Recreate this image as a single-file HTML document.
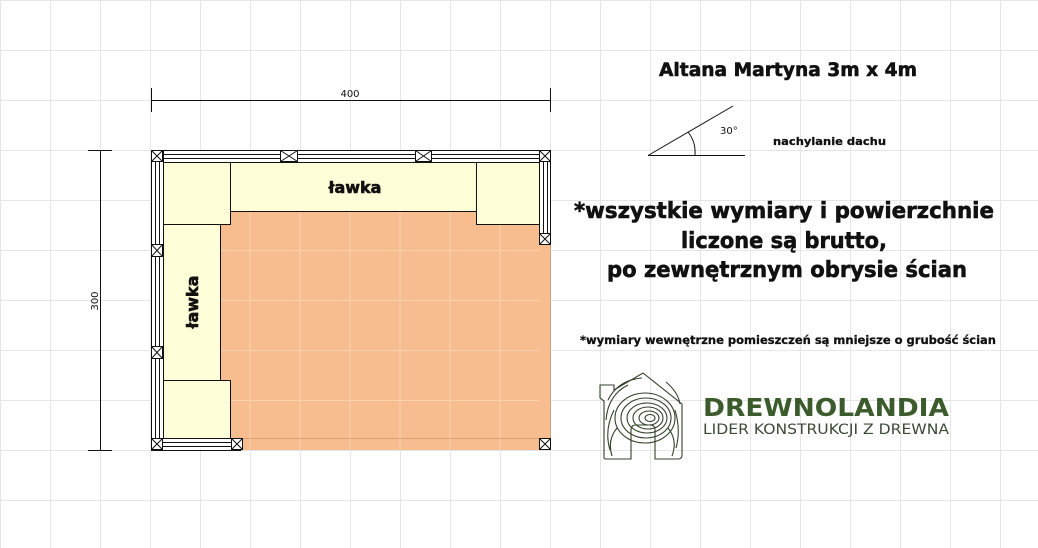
<!DOCTYPE html>
<html><head><meta charset="utf-8"><style>
html,body{margin:0;padding:0;background:#fff;}
svg{display:block}
text{font-family:"DejaVu Sans","Liberation Sans",sans-serif;}
.b{stroke:#111;stroke-width:0.6}
</style></head><body>
<svg width="1038" height="548" viewBox="0 0 1038 548" xmlns="http://www.w3.org/2000/svg">
<defs>
<pattern id="g" x="0" y="0" width="50" height="50" patternUnits="userSpaceOnUse">
<path d="M0 0.5H50M0.5 0V50" stroke="#e6e6e6" stroke-width="1" fill="none"/>
</pattern>
</defs>
<rect width="1038" height="548" fill="#fff"/>
<rect width="1038" height="548" fill="url(#g)"/>

<rect x="220" y="211" width="330" height="239" fill="#f7bd8e"/>
<g stroke="#fbd2b0" stroke-width="1">
<path d="M250 211V450M300 211V450M350 211V450M400 211V450M450 211V450M500 211V450M220 250.5H540M220 300.5H540M220 350.5H540M220 400.5H540"/>
</g>
<path d="M240 438.5H540" stroke="#d8a07a"/>
<path d="M550.5 244V450" stroke="#c9a080"/>

<g fill="#fefed8" stroke="#111" stroke-width="1">
<rect x="163.5" y="162.5" width="67" height="62"/>
<rect x="230.5" y="162.5" width="246" height="49"/>
<rect x="476.5" y="162.5" width="63" height="62"/>
<rect x="163.5" y="224.5" width="57" height="156"/>
<rect x="163.5" y="380.5" width="67" height="58"/>
</g>
<text x="355" y="193" font-size="16" font-weight="bold" text-anchor="middle" fill="#111" class="b">ławka</text>
<text transform="translate(198,302) rotate(-90)" font-size="16" font-weight="bold" text-anchor="middle" fill="#111" class="b">ławka</text>

<g fill="#fff" stroke="#111" stroke-width="1">
<rect x="151.5" y="150.5" width="399" height="12"/>
<rect x="151.5" y="150.5" width="12" height="300"/>
<rect x="539.5" y="150.5" width="11" height="94"/>
<rect x="151.5" y="438.5" width="89" height="12"/>
</g>
<g stroke="#111" stroke-width="1" fill="none">
<path d="M163 154.5H539M163 158.5H539"/>
<path d="M155.5 162V438M159.5 162V438"/>
<path d="M543.5 162V233M547.5 162V233"/>
<path d="M163 442.5H232M163 446.5H232"/>
</g>
<g stroke="#111" stroke-width="1" fill="#fff">
<rect x="151.5" y="150.5" width="11" height="11"/><path d="M151.5 150.5L162.5 161.5M162.5 150.5L151.5 161.5"/>
<rect x="280.5" y="150.5" width="17" height="11"/><path d="M280.5 150.5L297.5 161.5M297.5 150.5L280.5 161.5"/>
<rect x="415.5" y="150.5" width="16" height="11"/><path d="M415.5 150.5L431.5 161.5M431.5 150.5L415.5 161.5"/>
<rect x="539.5" y="150.5" width="11" height="11"/><path d="M539.5 150.5L550.5 161.5M550.5 150.5L539.5 161.5"/>
<rect x="151.5" y="244.5" width="11" height="12"/><path d="M151.5 244.5L162.5 256.5M162.5 244.5L151.5 256.5"/>
<rect x="151.5" y="346.5" width="11" height="12"/><path d="M151.5 346.5L162.5 358.5M162.5 346.5L151.5 358.5"/>
<rect x="539.5" y="233.5" width="11" height="11"/><path d="M539.5 233.5L550.5 244.5M550.5 233.5L539.5 244.5"/>
<rect x="151.5" y="438.5" width="11" height="11"/><path d="M151.5 438.5L162.5 449.5M162.5 438.5L151.5 449.5"/>
<rect x="231.5" y="438.5" width="11" height="11"/><path d="M231.5 438.5L242.5 449.5M242.5 438.5L231.5 449.5"/>
<rect x="539.5" y="438.5" width="11" height="11"/><path d="M539.5 438.5L550.5 449.5M550.5 438.5L539.5 449.5"/>
</g>

<g stroke="#111" stroke-width="1" fill="none">
<path d="M151 100.5H550M151.5 88V112M550.5 88V112"/>
<path d="M100.5 150V450M88 150.5H112M88 450.5H112"/>
</g>
<text x="350" y="97" font-size="10" text-anchor="middle" fill="#111" font-family="Liberation Sans">400</text>
<text transform="translate(98,301) rotate(-90)" font-size="10" text-anchor="middle" fill="#111" font-family="Liberation Sans">300</text>

<text x="788" y="76" font-size="19" font-weight="bold" text-anchor="middle" fill="#111" class="b" textLength="258" lengthAdjust="spacingAndGlyphs">Altana Martyna 3m x 4m</text>
<g stroke="#111" stroke-width="1" fill="none">
<path d="M648 155.5H745M648 155.5L733 106"/>
<path d="M688 132Q696 142 695 155"/>
</g>
<text x="720" y="134" font-size="10" fill="#111" font-family="Liberation Sans">30°</text>
<text x="773" y="145" font-size="11" font-weight="bold" fill="#111" class="b" style="stroke-width:0.3" textLength="113" lengthAdjust="spacingAndGlyphs">nachylanie dachu</text>

<text x="784" y="218" font-size="22" font-weight="bold" text-anchor="middle" fill="#111" class="b" textLength="420" lengthAdjust="spacingAndGlyphs">*wszystkie wymiary i powierzchnie</text>
<text x="784" y="248" font-size="22" font-weight="bold" text-anchor="middle" fill="#111" class="b" textLength="206" lengthAdjust="spacingAndGlyphs">liczone są brutto,</text>
<text x="787" y="277" font-size="22" font-weight="bold" text-anchor="middle" fill="#111" class="b" textLength="360" lengthAdjust="spacingAndGlyphs">po zewnętrznym obrysie ścian</text>
<text x="788" y="344" font-size="11.5" font-weight="bold" text-anchor="middle" fill="#111" class="b" style="stroke-width:0.3" textLength="416" lengthAdjust="spacingAndGlyphs">*wymiary wewnętrzne pomieszczeń są mniejsze o grubość ścian</text>

<!-- logo -->
<g stroke="#33422b" stroke-width="1.1" fill="none">
<path d="M604 458V401L600 398V385H614V390L643 373L682 404V455Q682 459 678 459H655V430Q655 425 650 425H636Q631 425 631 430V459H607Q604 459 604 458Z"/>
<ellipse cx="650" cy="418" rx="5" ry="3.5"/>
<ellipse cx="649" cy="418" rx="10" ry="7"/>
<ellipse cx="648" cy="418" rx="15" ry="11"/>
<ellipse cx="647" cy="418" rx="20" ry="15"/>
<ellipse cx="646" cy="418" rx="25" ry="20"/>
<ellipse cx="645" cy="418" rx="30" ry="25"/>
<path d="M608 400Q618 380 642 378M606 420Q608 395 628 385M610 450Q604 430 614 410M676 448Q681 430 675 410M612 456Q607 440 617 428M672 456Q678 440 668 428M666 382Q678 392 680 404"/>
</g>
<text x="703" y="416" font-size="25" font-weight="bold" fill="#3b5b2c" textLength="246" lengthAdjust="spacingAndGlyphs" font-family="Liberation Sans">DREWNOLANDIA</text>
<text x="703" y="434" font-size="14" fill="#3b4a35" textLength="246" lengthAdjust="spacingAndGlyphs" font-family="Liberation Sans">LIDER KONSTRUKCJI Z DREWNA</text>
</svg>
</body></html>
